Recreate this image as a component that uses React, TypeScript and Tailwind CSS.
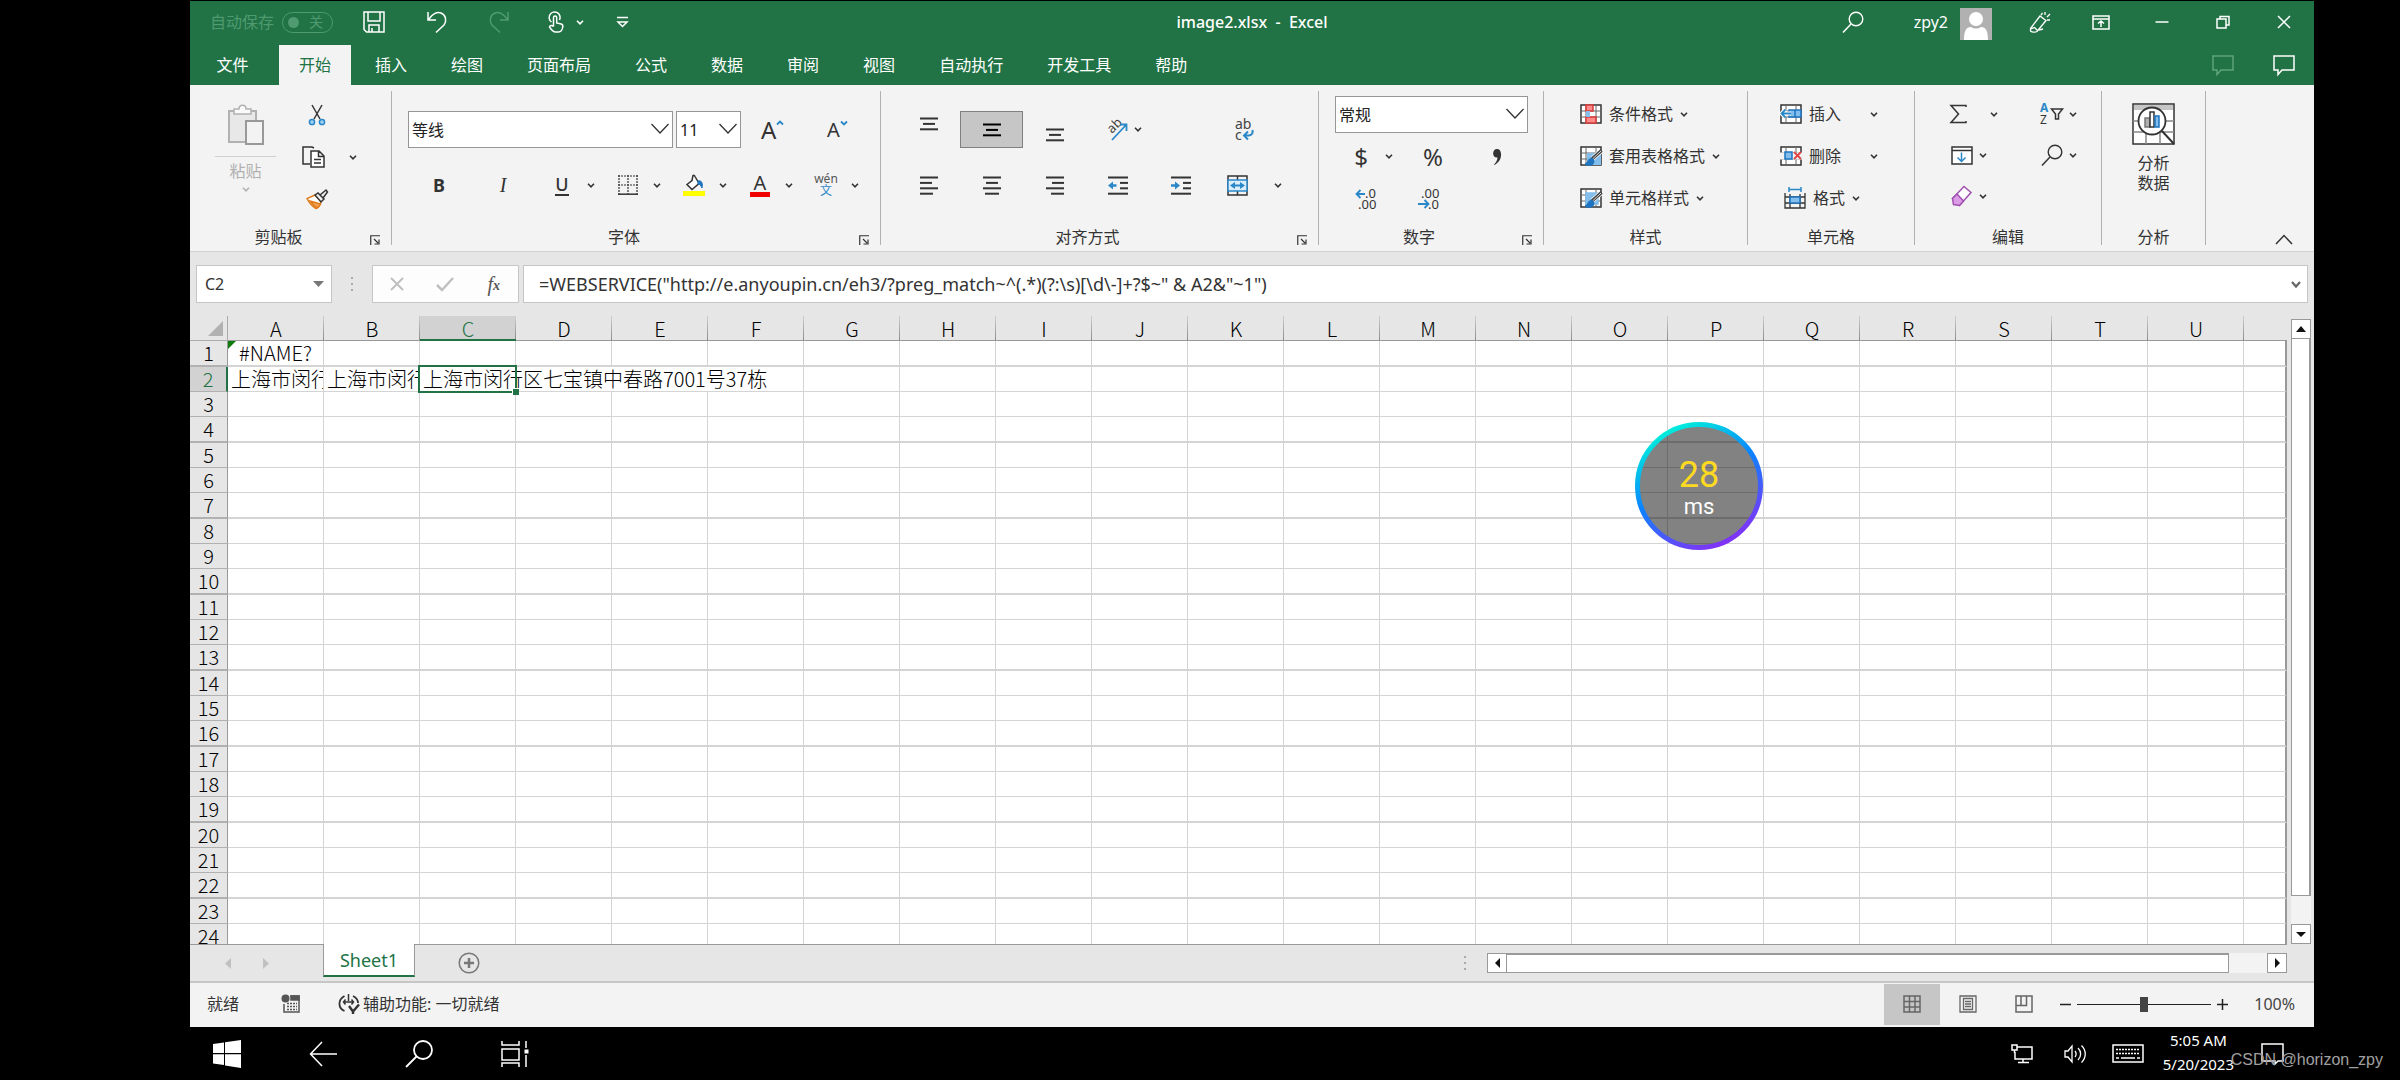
import { useState } from "react";
import type { ReactNode } from "react";
import clsx from "clsx";

const COLUMNS = "ABCDEFGHIJKLMNOPQRSTU".split("");
const ROWS = Array.from({ length: 24 }, (_, i) => i + 1);
const TABS = ["插入", "绘图", "页面布局", "公式", "数据", "审阅", "视图", "自动执行", "开发工具", "帮助"];
const FORMULA = '=WEBSERVICE("http://e.anyoupin.cn/eh3/?preg_match~^(.*)(?:\\s)[\\d\\-]+?$~" & A2&"~1")';
const CELLS: Record<string, string> = {
  A1: "#NAME?",
  A2: "上海市闵行",
  B2: "上海市闵行",
  C2: "上海市闵行区七宝镇中春路7001号37栋",
};

const Caret = ({ className = "" }: { className?: string }) => (
  <svg width="8" height="5" viewBox="0 0 8 5" fill="none" stroke="currentColor" strokeWidth="1.6" className={clsx("shrink-0", className)}>
    <path d="M1 .8 4 3.8 7 .8" />
  </svg>
);

const Icon = ({ w = 22, h = 22, className = "", children }: { w?: number; h?: number; className?: string; children: ReactNode }) => (
  <svg
    width={w}
    height={h}
    viewBox={`0 0 ${w} ${h}`}
    fill="none"
    stroke="currentColor"
    strokeWidth="1.5"
    className={clsx("shrink-0 overflow-visible", className)}
    aria-hidden="true"
  >
    {children}
  </svg>
);

/* ---------- Ribbon building blocks ---------- */

const Group = ({ label, launcher, className, children }: { label: string; launcher?: boolean; className: string; children: ReactNode }) => (
  <section aria-label={label} className={clsx("flex shrink-0 flex-col border-r border-[#b1b1b1]", className)}>
    <div className="min-h-0 flex-1">{children}</div>
    <div className="flex h-4 items-center">
      <span className="flex-1 text-center text-base leading-5">{label}</span>
      {launcher && (
        <button type="button" aria-label={label + "设置"} className="mr-2 flex w-4 justify-center pt-1.5">
          <Icon w={10} h={10}>
            <path d="M.75 10V.75H10M4 4l4 4M9 4.5V9H4.5" strokeWidth="1.2" />
          </Icon>
        </button>
      )}
    </div>
  </section>
);

const Tool = ({ label, className = "", children }: { label: string; className?: string; children: ReactNode }) => (
  <button type="button" aria-label={label} className={clsx("flex shrink-0 items-center", className)}>
    {children}
  </button>
);

const Split = ({ label, gap = "gap-[14px]", children }: { label: string; gap?: string; children: ReactNode }) => (
  <button type="button" aria-label={label} className={clsx("flex h-9 shrink-0 items-center", gap)}>
    <span className="flex w-[22px] justify-center">{children}</span>
    <Caret />
  </button>
);

const Combo = ({ label, value, className }: { label: string; value: string; className: string }) => (
  <div className={clsx("relative h-[37px]", className)}>
    <select aria-label={label} defaultValue={value} className="size-full appearance-none border border-[#969696] bg-white pl-[3px] text-base text-[#222]">
      <option>{value}</option>
    </select>
    <Icon w={20} h={12} className="pointer-events-none absolute top-3 right-[3px]">
      <path d="M1.5 1 10 10l8.5-9" strokeWidth="1.3" />
    </Icon>
  </div>
);

/* ---------- Icons ---------- */

const lines = (rows: number[][]) => rows.map(([x1, x2], i) => <path key={i} d={`M${x1} ${1.5 + i * 5.4}H${x2}`} strokeWidth="2" />);

const GridBase = () => (
  <>
    <path d="M1 1h20v18H1z" fill="#fff" />
    <path d="M1 7h20M1 13h20M6 1v18M16 1v18" stroke="#666" strokeWidth="1" />
  </>
);

const Brush = () => (
  <>
    <path d="M21 5 12 13" stroke="#fff" strokeWidth="5" />
    <path d="M21.5 4.5 12 13" stroke="#444" strokeWidth="3.4" />
    <path d="M21 5 12.5 13" stroke="#ddd" strokeWidth="1" />
    <path d="M12 12c-4 0-4 5-7 6 3 2.500 9 2 9-3z" fill="#1e74c0" stroke="#1e74c0" strokeWidth="1" />
  </>
);

const SearchIcon = () => (
  <Icon>
    <circle cx="14" cy="8" r="6.8" strokeWidth="1.4" />
    <path d="M9 13 1 21.5" />
  </Icon>
);

/* ---------- Title bar and tabs ---------- */

const TitleBar = () => (
  <header className="grid h-11 shrink-0 grid-cols-[1fr_auto_1fr] items-center pb-0.5 text-white">
    <div className="flex items-center">
      <label className="flex items-center gap-2 pl-5 text-[#4f9a70]">
        <span className="text-base">自动保存</span>
        <span className="flex h-[21px] w-[51px] items-center rounded-full border border-[#4f9a70] pl-[5px]">
          <input type="checkbox" disabled className="size-[11px] appearance-none rounded-full bg-[#4f9a70]" />
          <span className="ml-2.5 text-sm leading-none">关</span>
        </span>
      </label>
      <div className="flex items-center pl-[30px]">
        <Tool label="保存" className="w-[64px]">
          <Icon>
            <path d="M1 1h20v20H3.5L1 18.5zM5 1v9h12V1M6 21v-7h10v7M9 17v4" />
          </Icon>
        </Tool>
        <Tool label="撤消" className="w-[61px]">
          <Icon w={21} h={22}>
            <path d="M1 1v8h8M1.500 8.500C5 3 10 .5 14 2c5 2 6 8 3 12l-8 7.500" />
          </Icon>
        </Tool>
        <Tool label="恢复" className="w-[59px] text-[#4f9a70]">
          <Icon w={21} h={22}>
            <path d="M20 1v8h-8M19.500 8.500C16 3 11 .5 7 2 2 4 1 10 4 14l8 7.500" />
          </Icon>
        </Tool>
        <Tool label="触摸/鼠标模式" className="w-[68px] gap-3">
          <Icon w={17} h={22}>
            <path d="M4.500 11A5.500 5.500 0 1 1 12.500 9M6.500 15.500V6.500a1.600 1.600 0 0 1 3.200 0V12l4.500 1c1.500.5 1.800 1.500 1.600 3-.5 3-2 5-4.300 5H8.500c-2.500 0-4-2-6-5 .5-2 2.500-2 4-.5" />
          </Icon>
          <Caret />
        </Tool>
        <Tool label="自定义快速访问工具栏">
          <Icon w={14} h={12}>
            <path d="M2 1.5h11M3 6l4.5 4.5L12 6z" />
          </Icon>
        </Tool>
      </div>
    </div>
    <h1 className="text-base font-medium whitespace-pre">image2.xlsx&nbsp; -&nbsp; Excel</h1>
    <div className="flex items-center justify-end">
      <Tool label="搜索" className="mr-[50px]">
        <SearchIcon />
      </Tool>
      <button type="button" className="mr-[17px] flex items-center gap-3 text-base">
        zpy2
        <svg width="32" height="32" viewBox="0 0 32 32" className="mt-1" aria-hidden="true">
          <path fill="#b1b1b1" d="M0 0h32v32H0z" />
          <circle cx="16" cy="11" r="7" fill="#fff" />
          <path fill="#fff" d="M4 32c0-9 2-13 7-13 3 2 7 2 10 0 5 0 7 4 7 13z" />
        </svg>
      </button>
      <Tool label="绘图工具" className="w-[61px] justify-center">
        <Icon>
          <path d="M1.500 17.500 11 5l6 4.500-9 11c-1.500 1-5 1-6.500-.5zM1.500 18l4-1.500 3 3M12 4l1.500-2M16 1v3M18 6l3-3M18 9h3M10 19l4-1" strokeWidth="1.3" />
        </Icon>
      </Tool>
      <Tool label="功能区显示选项" className="w-[61px] justify-center">
        <Icon w={18} h={15}>
          <path d="M1 1h16v13H1zM1 4h16M9 12V6M6 8.500 9 6l3 2.500" />
        </Icon>
      </Tool>
      <Tool label="最小化" className="w-[61px] justify-center">
        <Icon w={14} h={14}>
          <path d="M.5 7h13" />
        </Icon>
      </Tool>
      <Tool label="还原" className="w-[61px] justify-center">
        <Icon w={14} h={14}>
          <path d="M1 4h9v9H1zM4 4V1.500h9V10h-3" />
        </Icon>
      </Tool>
      <Tool label="关闭" className="w-[61px] justify-center">
        <Icon w={14} h={14}>
          <path d="m1 1 12 12M13 1 1 13" />
        </Icon>
      </Tool>
    </div>
  </header>
);

const CommentIcon = () => (
  <Icon w={22} h={21}>
    <path d="M1 1h20v14H9l-4 4.500V15H1z" />
  </Icon>
);

const TabBar = () => (
  <nav className="flex h-10 shrink-0 gap-1 text-base text-white">
    <button type="button" className="w-[85px]">文件</button>
    <button type="button" className="bg-[#f3f3f3] px-5 text-[#217346]">开始</button>
    {TABS.map((tab) => (
      <button key={tab} type="button" className="px-5">
        {tab}
      </button>
    ))}
    <div className="ml-auto flex">
      <Tool label="批注" className="w-[61px] justify-center text-[#5ea47c]">
        <CommentIcon />
      </Tool>
      <Tool label="共享批注" className="w-[61px] justify-center">
        <CommentIcon />
      </Tool>
    </div>
  </nav>
);

/* ---------- Ribbon groups ---------- */

const ClipboardGroup = () => (
  <Group label="剪贴板" launcher className="w-[202px]">
    <div className="flex pl-[25px]">
      <button type="button" className="flex w-[61px] flex-col items-center pt-[13px] text-[#b1b1b1]">
        <Icon w={36} h={41}>
          <path d="M1 7h27v31H1z" fill="#e8e8e8" strokeWidth="2" />
          <path d="M6 10V5h5c0-5 7-5 7 0h5v5z" fill="#fafafa" />
          <path d="M18 17h17v23H18z" fill="#f3f3f3" stroke="#999" strokeWidth="2" />
        </Icon>
        <span className="mt-[11px] w-full border-t border-[#d0d0d0] pt-1 text-base leading-5">粘贴</span>
        <Caret className="mt-1.5" />
      </button>
      <div className="flex flex-col items-start gap-0.5 pt-1 pl-[26px]">
        <Tool label="剪切" className="h-10 pl-1">
          <Icon>
            <path d="m6 1 8 14M16 1 8 15" />
            <circle cx="6" cy="18" r="2.6" stroke="#2b88c8" fill="#9fd0f0" />
            <circle cx="16" cy="18" r="2.6" stroke="#2b88c8" fill="#9fd0f0" />
          </Icon>
        </Tool>
        <Tool label="复制" className="h-10 gap-6">
          <Icon w={23} h={22}>
            <path d="M8 18H1V1h9l2 1" />
            <path d="M9 5h8l5 5v11H9zM16.500 5v5.500H22M12 13.500h7M12 17h7" fill="#fff" />
          </Icon>
          <Caret />
        </Tool>
        <Tool label="格式刷" className="h-10 pl-1">
          <Icon w={22} h={21}>
            <path d="M9 6 1 9.500c2 4 5 8 9 10 3-1 4-3 5-7z" fill="#fff" stroke="#e07b1c" />
            <path d="M4 12c2 3 4 5 7 7 2-1 3-3 3.500-4z" fill="#f0a050" stroke="#e07b1c" />
            <path d="m9 6 3-2 6 6-3 3zM14 6l6-5 1.500 2L17 9" fill="#eee" />
          </Icon>
        </Tool>
      </div>
    </div>
  </Group>
);

const FontGroup = () => (
  <Group label="字体" launcher className="w-[489px]">
    <div className="flex items-center pt-5 pl-4">
      <Combo label="字体" value="等线" className="w-[265px]" />
      <Combo label="字号" value="11" className="ml-[3px] w-[65px]" />
      <Tool label="增大字号" className="ml-[20px] w-[66px]">
        <span className="text-2xl leading-none">A</span>
        <Icon w={8} h={22} className="text-[#2b88c8]">
          <path d="M1 5.500 4 2.500l3 3" strokeWidth="1.8" />
        </Icon>
      </Tool>
      <Tool label="减小字号">
        <span className="text-xl leading-none">A</span>
        <Icon w={8} h={22} className="text-[#2b88c8]">
          <path d="m1 2.500 3 3 3-3" strokeWidth="1.8" />
        </Icon>
      </Tool>
    </div>
    <div className="mt-[19px] flex h-9 items-center pl-4 text-lg leading-none">
      <Tool label="加粗" className="w-[62px] justify-center font-bold">
        B
      </Tool>
      <Tool label="倾斜" className="w-[66px] justify-center font-['Liberation_Serif',serif] text-xl italic">
        I
      </Tool>
      <div className="flex gap-[22px] pl-[15px]">
        <Split label="下划线">
          <span className="border-b-2 border-[#333] leading-5 font-medium">U</span>
        </Split>
        <Split label="边框">
          <Icon w={20} h={20}>
            <path d="M0 1h20M1 0v19M19 0v19M10 0v19M0 10h20" strokeDasharray="2 1" strokeWidth="1.2" />
            <path d="M0 19.200h20" />
          </Icon>
        </Split>
        <Split label="填充颜色">
          <Icon>
            <path d="m10 1.500-1 5-5 4 5 5 7-6-4-7c-.5-1-1.500-1.500-2-1z" fill="#fff" />
            <path d="M15 7c4-1 5 3 4 7-1-2-2-4-4-4z" fill="#1e74c0" stroke="#1e74c0" strokeWidth="1" />
            <path d="M0 17h22v5H0z" fill="#ff0" stroke="none" />
          </Icon>
        </Split>
        <Split label="字体颜色">
          <span className="border-b-[5px] border-[#f00000] px-1 text-xl leading-[18px]">A</span>
        </Split>
        <Split label="拼音指南">
          <span className="flex flex-col items-center text-xs leading-3 text-[#555]">
            <span>wén</span>
            <span className="text-[#2b88c8]">文</span>
          </span>
        </Split>
      </div>
    </div>
  </Group>
);

const AlignmentGroup = () => (
  <Group label="对齐方式" launcher className="w-[438px]">
    <div className="flex items-center pt-5 pl-4">
      <Tool label="顶端对齐" className="h-[37px] w-[63px] items-start justify-center pt-1.5">
        <Icon w={18} h={14}>{lines([[0, 18], [3, 15], [0, 18]])}</Icon>
      </Tool>
      <Tool label="垂直居中" className="h-[37px] w-[63px] justify-center border border-[#808080] bg-[#c6c6c6] text-black">
        <Icon w={18} h={14}>{lines([[0, 18], [3, 15], [0, 18]])}</Icon>
      </Tool>
      <Tool label="底端对齐" className="h-[37px] w-[63px] items-end justify-center pb-1.5">
        <Icon w={18} h={14}>{lines([[0, 18], [3, 15], [0, 18]])}</Icon>
      </Tool>
      <Tool label="方向" className="w-[126px] gap-1.5 pl-5">
        <Icon>
          <text fontSize="13" fill="#444" stroke="none" transform="translate(6 15) rotate(-45)">ab</text>
          <path d="M6 21 20 6M14 5.500h6.500V12" stroke="#2b88c8" strokeWidth="1.8" />
        </Icon>
        <Caret />
      </Tool>
      <Tool label="自动换行" className="w-[63px] justify-center">
        <Icon w={20} h={22}>
          <text x="1" y="10" fontSize="14" fill="#444" stroke="none">ab</text>
          <text x="1" y="21" fontSize="14" fill="#444" stroke="none">c</text>
          <path d="M18.500 11c1 5-3 6-8 5.500M14 12.500 10 16.500l4 4" stroke="#2b88c8" strokeWidth="2" />
        </Icon>
      </Tool>
    </div>
    <div className="mt-[19px] flex h-9 items-center pl-4">
      <Tool label="左对齐" className="w-[63px] justify-center">
        <Icon w={18} h={19}>{lines([[0, 18], [0, 12], [0, 18], [0, 13]])}</Icon>
      </Tool>
      <Tool label="居中" className="w-[63px] justify-center">
        <Icon w={18} h={19}>{lines([[0, 18], [3, 15], [0, 18], [2, 16]])}</Icon>
      </Tool>
      <Tool label="右对齐" className="w-[63px] justify-center">
        <Icon w={18} h={19}>{lines([[0, 18], [6, 18], [0, 18], [5, 18]])}</Icon>
      </Tool>
      <Tool label="减少缩进量" className="w-[63px] justify-center">
        <Icon w={20} h={19}>
          {lines([[0, 20], [12, 20], [12, 20], [0, 20]])}
          <path d="M8.500 9.500H2" stroke="#2b88c8" strokeWidth="2.5" />
          <path d="M5 5.500v8L0 9.500z" fill="#2b88c8" stroke="none" />
        </Icon>
      </Tool>
      <Tool label="增加缩进量" className="w-[63px] justify-center">
        <Icon w={20} h={19}>
          {lines([[0, 20], [12, 20], [12, 20], [0, 20]])}
          <path d="M0 9.500h6" stroke="#2b88c8" strokeWidth="2.5" />
          <path d="M4 5.500v8l5-4z" fill="#2b88c8" stroke="none" />
        </Icon>
      </Tool>
      <Tool label="合并后居中" className="gap-[26px] pl-[15px]">
        <Icon w={21} h={21}>
          <path d="M1 1h19v19H1zM10.500 1v4M10.500 16v4" />
          <path d="M1 5h19v11H1z" fill="#d9edfb" stroke="#2b88c8" />
          <path d="M5 10.500h11" stroke="#2b88c8" strokeWidth="2" />
          <path d="M8 7v7l-5-3.500zM13 7v7l5-3.500z" fill="#2b88c8" stroke="none" />
        </Icon>
        <Caret />
      </Tool>
    </div>
  </Group>
);

const NumberGroup = () => (
  <Group label="数字" launcher className="w-[225px]">
    <div className="flex flex-col gap-[5px] pt-[5px] pl-4">
      <Combo label="数字格式" value="常规" className="w-[193px]" />
      <div className="flex h-[37px] items-center pl-[15px] text-2xl leading-none">
        <Split label="会计数字格式" gap="gap-[13px]">$</Split>
        <Tool label="百分比样式" className="ml-2 w-16 justify-center">%</Tool>
        <Tool label="千位分隔样式" className="w-16 justify-center">
          <Icon w={10} h={18}>
            <path d="M9 5.500c.5 5-2 9-6.500 11.500l-.5-.5c2-2 3.500-4.500 3.500-7C-.5 10 0 1 5 1c2.500 0 3.800 2 4 4.500z" fill="currentColor" stroke="none" />
          </Icon>
        </Tool>
      </div>
      <div className="flex h-[37px] items-center">
        <Tool label="增加小数位数" className="w-[62px] justify-center">
          <Icon>
            <text x="10" y="10" fontSize="13" fill="#333" stroke="none">.0</text>
            <text x="3" y="21" fontSize="13" fill="#333" stroke="none">.00</text>
            <path d="M10 6H1.500M5.500 2l-4 4 4 4" stroke="#2b88c8" strokeWidth="1.8" />
          </Icon>
        </Tool>
        <Tool label="减少小数位数" className="w-16 justify-center">
          <Icon>
            <text x="3" y="10" fontSize="13" fill="#333" stroke="none">.00</text>
            <text x="10" y="21" fontSize="13" fill="#333" stroke="none">.0</text>
            <path d="M0 16h10M6.500 12l4 4-4 4" stroke="#2b88c8" strokeWidth="1.8" />
          </Icon>
        </Tool>
      </div>
    </div>
  </Group>
);

const TextTool = ({ label, caretGap = "", children }: { label: string; caretGap?: string; children: ReactNode }) => (
  <button type="button" className="flex h-10 items-center gap-[7px] text-base whitespace-nowrap">
    {children}
    <span>{label}</span>
    <Caret className={caretGap} />
  </button>
);

const StylesGroup = () => (
  <Group label="样式" className="w-[204px]">
    <div className="flex flex-col items-start gap-0.5 pt-[3px] pl-9">
      <TextTool label="条件格式">
        <Icon w={22} h={20}>
          <GridBase />
          <path d="M6 1h7v6H6zM6 13h10v6H6z" fill="#ff8a8a" stroke="#d83b3b" />
          <path d="M6 7h4v6H6z" fill="#83beec" stroke="none" />
        </Icon>
      </TextTool>
      <TextTool label="套用表格格式">
        <Icon w={22} h={20}>
          <GridBase />
          <path d="M7 7h14v12H7z" fill="#83beec" stroke="none" />
          <Brush />
        </Icon>
      </TextTool>
      <TextTool label="单元格样式">
        <Icon w={22} h={20}>
          <GridBase />
          <path d="M6 5h12v11H6z" fill="#83beec" stroke="#83beec" />
          <Brush />
        </Icon>
      </TextTool>
    </div>
  </Group>
);

const CellsGroup = () => (
  <Group label="单元格" className="w-[167px]">
    <div className="flex flex-col items-start gap-0.5 pt-[3px] pl-8">
      <TextTool label="插入" caretGap="ml-[22px]">
        <Icon w={22} h={20}>
          <GridBase />
          <path d="M9 6h12v7H9z" fill="#83beec" stroke="#1e74c0" />
          <path d="M15 6v7" stroke="#1e74c0" />
          <path d="M11 9.500H1.500M5.500 5.500l-4 4 4 4" stroke="#fff" strokeWidth="4" />
          <path d="M11 9.500H1.500M5.500 5.500l-4 4 4 4" stroke="#2b88c8" strokeWidth="1.8" />
        </Icon>
      </TextTool>
      <TextTool label="删除" caretGap="ml-[22px]">
        <Icon w={22} h={20}>
          <GridBase />
          <path d="M0 6.500h22v7H0z" fill="#f3f3f3" stroke="none" />
          <path d="M5 6h7v7H5z" fill="#83beec" stroke="#1e74c0" />
          <path d="m14 6 7 7M21 6l-7 7" stroke="#e04343" strokeWidth="1.8" />
        </Icon>
      </TextTool>
      <div className="pl-1">
        <TextTool label="格式">
          <Icon>
            <path d="M5 0v5M17 0v5M5 2.500h12" stroke="#2b88c8" />
            <path d="M1 6v15h20V6M1 10h20M1 16h20M6 7v14M16 7v14" strokeWidth="1.3" />
            <path d="M6 10h10v6H6z" fill="#83beec" stroke="#1e74c0" />
          </Icon>
        </TextTool>
      </div>
    </div>
  </Group>
);

const EditingGroup = () => (
  <Group label="编辑" className="w-[187px]">
    <div className="flex justify-between pr-6 pl-9">
      <div className="flex flex-col items-start gap-[5px] pt-[5px]">
        <Split label="自动求和" gap="gap-[17px]">
          <Icon w={22} h={20}>
            <path d="M15 3V1.500H0l7.500 8.500L0 18.500h15V17" />
          </Icon>
        </Split>
        <Split label="填充" gap="gap-1.5">
          <Icon w={22} h={19}>
            <path d="M1 1h20v17H1z" fill="#fff" />
            <path d="M1 4.500h20" />
            <path d="M10.500 6.500v9M6.500 11.500l4 4 4-4" stroke="#2b88c8" />
          </Icon>
        </Split>
        <Split label="清除" gap="gap-1.5">
          <Icon>
            <path d="M1.500 13.500 13 1.500l7 6L8.500 20.500z" fill="#fff" stroke="#a050b0" />
            <path d="M1.500 13.500 6 9l6.500 7-4 4.500-6-1z" fill="#dc9be6" stroke="#a050b0" />
          </Icon>
        </Split>
      </div>
      <div className="flex flex-col items-start gap-[5px] pt-[5px]">
        <Split label="排序和筛选" gap="gap-1.5">
          <Icon>
            <text x="-1" y="9" fontSize="12" fontWeight="700" fill="#2b88c8" stroke="none">A</text>
            <text x="-1" y="21" fontSize="12" fill="#333" stroke="none">Z</text>
            <path d="M10.500 6h11L17.500 11v5h-3v-5z" />
          </Icon>
        </Split>
        <Split label="查找和选择" gap="gap-1.5">
          <SearchIcon />
        </Split>
      </div>
    </div>
  </Group>
);

const AnalysisGroup = () => (
  <Group label="分析" className="w-[104px]">
    <button type="button" className="flex w-full flex-col items-center pt-3 text-base leading-5">
      <Icon w={43} h={42} className="mb-2">
        <path d="M1 1h41v40H1z" fill="#fff" />
        <path d="M2 2h39v5H2z" fill="#c6c6c6" stroke="none" />
        <path d="M1 18h41M1 29h41M14 29v12M28 29v12" stroke="#888" />
        <circle cx="20" cy="18" r="13.5" fill="#fff" strokeWidth="1.8" />
        <path d="M13 15h5v9h-5z" fill="#b1b1b1" stroke="#777" />
        <path d="M18 9h4v15h-4z" fill="#fff" />
        <path d="M23 13h4v11h-4z" fill="#83beec" stroke="#1e74c0" />
        <path d="m30 28 12 13" strokeWidth="2" />
      </Icon>
      <span>分析</span>
      <span>数据</span>
    </button>
  </Group>
);

const Ribbon = () => (
  <div className="flex h-[167px] shrink-0 border-b border-[#d2d2d2] bg-[#f3f3f3] py-1.5 text-[#333]">
    <ClipboardGroup />
    <FontGroup />
    <AlignmentGroup />
    <NumberGroup />
    <StylesGroup />
    <CellsGroup />
    <EditingGroup />
    <AnalysisGroup />
    <Tool label="折叠功能区" className="mt-auto mr-[21px] ml-auto">
      <Icon w={18} h={11}>
        <path d="m1 10 8-8.500 8 8.500" />
      </Icon>
    </Tool>
  </div>
);

/* ---------- Formula bar ---------- */

const FormulaBar = () => (
  <div className="flex h-16 shrink-0 items-start bg-[#e6e6e6] px-1.5 pt-[13px] text-base text-[#333]">
    <div className="relative h-[38px] w-[136px]">
      <input aria-label="名称框" defaultValue="C2" className="size-full border border-[#c6c6c6] bg-white pl-2" />
      <svg width="11" height="6" className="pointer-events-none absolute top-4 right-2" aria-hidden="true">
        <path d="M0 0h11L5.500 6z" fill="#777" />
      </svg>
    </div>
    <svg width="40" height="38" aria-hidden="true">
      <path d="M19 12h2v2h-2zM19 18h2v2h-2zM19 24h2v2h-2z" fill="#aaa" />
    </svg>
    <div className="flex h-[38px] w-[147px] border border-[#c6c6c6] bg-[#fdfdfd]">
      <Tool label="取消" className="flex-1 justify-center text-[#c0c0c0]">
        <Icon w={14} h={14}>
          <path d="m1 1 12 12M13 1 1 13" strokeWidth="2" />
        </Icon>
      </Tool>
      <Tool label="输入" className="flex-1 justify-center text-[#c0c0c0]">
        <Icon w={18} h={14}>
          <path d="m1 8 5 5L17 1" strokeWidth="2.5" />
        </Icon>
      </Tool>
      <Tool label="插入函数" className="flex-1 justify-center font-['Liberation_Serif',serif] text-xl text-[#555] italic">
        f<span className="pt-1 text-sm font-bold">x</span>
      </Tool>
    </div>
    <div className="relative ml-1 h-[38px] min-w-0 flex-1">
      <input aria-label="编辑栏" defaultValue={FORMULA} className="size-full border border-[#c6c6c6] bg-white pl-[15px] text-lg" />
      <Icon w={10} h={7} className="pointer-events-none absolute top-4 right-[7px] text-[#666]">
        <path d="m1 1 4 4.500L9 1" strokeWidth="2.2" />
      </Icon>
    </div>
  </div>
);

/* ---------- Sheet ---------- */

const Cell = ({ col, row }: { col: string; row: number }) => {
  const text = CELLS[`${col}${row}`];
  const selected = col === "C" && row === 2;
  // the address in C2 runs on over D2 and E2
  const spilled = row === 2 && (col === "D" || col === "E");
  return (
    <td className={clsx("relative border-[#d4d4d4] p-0 align-top", row % 3 === 1 ? "h-[26px] border-b-2" : "h-[25px] border-b", !spilled && "border-r")}>
      {text && (
        <div className={clsx("leading-[23px] whitespace-nowrap", row === 1 ? "text-center" : "pl-[3px]", !selected && "overflow-hidden")}>{text}</div>
      )}
      {row === 1 && col === "A" && <span className="absolute top-0 left-0 size-2 bg-[#0f7b0f] [clip-path:polygon(0_0,100%_0,0_100%)]" />}
      {selected && (
        <span className="pointer-events-none absolute -inset-0.5 z-10 border-2 border-[#217346]">
          <span className="absolute -right-1 -bottom-1 size-[7px] border-t border-l border-white bg-[#217346]" />
        </span>
      )}
    </td>
  );
};

const Sheet = () => (
  <div className="min-w-0 flex-1 overflow-hidden bg-white">
    <table className="w-full table-fixed border-separate border-spacing-0 font-['Noto_Sans_CJK_SC',sans-serif] text-xl font-light text-black">
      <colgroup>
        <col className="w-[38px]" />
        {COLUMNS.map((c) => (
          <col key={c} className="w-24" />
        ))}
        <col />
      </colgroup>
      <thead>
        <tr className="bg-[#e6e6e6]">
          <th aria-label="全选" className="h-[25px] border-r border-b border-[#ababab] p-0">
            <svg width="15" height="15" className="ml-auto mr-1" aria-hidden="true">
              <path d="M15 0v15H0z" fill="#b1b1b1" />
            </svg>
          </th>
          {COLUMNS.map((c) => (
            <th
              key={c}
              scope="col"
              className={clsx(
                "relative h-[25px] p-0 pt-0.5 leading-5 font-light after:absolute after:inset-y-0 after:right-0 after:w-px after:bg-linear-to-b after:from-[#d0d0d0] after:to-[#8c8c8c]",
                c === "C" ? "border-b-2 border-[#217346] bg-[#d2d2d2] text-[#217346]" : "border-b border-[#999]",
              )}
            >
              {c}
            </th>
          ))}
          <th className="border-b border-[#999] p-0" />
        </tr>
      </thead>
      <tbody>
        {ROWS.map((r) => (
          <tr key={r}>
            <th
              scope="row"
              className={clsx(
                "p-0 align-top leading-[23px] font-light",
                r % 3 === 1 ? "border-b-2" : "border-b",
                r === 2 ? "border-r-2 border-r-[#217346] border-b-[#b1b1b1] bg-[#d2d2d2] text-[#217346]" : "border-r border-r-[#999] border-b-[#b1b1b1] bg-[#e6e6e6]",
              )}
            >
              {r}
            </th>
            {COLUMNS.map((c) => (
              <Cell key={c} col={c} row={r} />
            ))}
            <td className={clsx("border-r-2 border-r-[#999] border-b-[#d4d4d4] p-0", r % 3 === 1 ? "border-b-2" : "border-b")} />
          </tr>
        ))}
      </tbody>
    </table>
  </div>
);

const ScrollButton = ({ label, d, className }: { label: string; d: string; className: string }) => (
  <button type="button" aria-label={label} className={clsx("flex shrink-0 items-center justify-center border border-[#999] bg-white", className)}>
    <svg width="10" height="10" aria-hidden="true">
      <path d={d} fill="#111" />
    </svg>
  </button>
);

const VerticalScroll = () => (
  <div className="mt-[3px] mr-[3px] ml-1 flex w-5 shrink-0 flex-col bg-[#f3f3f3]">
    <ScrollButton label="向上滚动" d="M5 2l5 6H0z" className="h-5" />
    <div className="-mt-px flex-1 border border-r-2 border-[#999] bg-white" />
    <div className="h-7" />
    <ScrollButton label="向下滚动" d="M0 3h10L5 8z" className="h-5" />
  </div>
);

/* ---------- Sheet tabs and status bar ---------- */

const SheetTabs = () => (
  <div className="flex h-[39px] shrink-0 items-start border-b-2 border-[#c6c6c6] bg-[#e6e6e6]">
    <div className="flex h-full flex-1 border-t border-[#999]">
      <div className="flex h-9 w-[133px] items-center gap-8 pl-[35px] text-[#c0c0c0]">
        <svg width="6" height="11" role="img" aria-label="上一张">
          <path d="M6 0v11L0 5.500z" fill="currentColor" />
        </svg>
        <svg width="6" height="11" role="img" aria-label="下一张">
          <path d="M0 0v11l6-5.500z" fill="currentColor" />
        </svg>
      </div>
      <button type="button" className="-mt-px h-[33px] w-[92px] border-x border-b-2 border-x-[#999] border-b-[#217346] bg-white text-lg leading-none text-[#217346]">
        Sheet1
      </button>
      <Tool label="新工作表" className="ml-[43px] h-9 text-[#777]">
        <Icon>
          <circle cx="11" cy="11" r="9.8" />
          <path d="M11 6v10M6 11h10" strokeWidth="2.5" />
        </Icon>
      </Tool>
      <svg width="3" height="38" className="mr-5 ml-auto" aria-hidden="true">
        <path d="M0 11h2v2H0zM0 17h2v2H0zM0 23h2v2H0z" fill="#aaa" />
      </svg>
    </div>
    <div className="flex h-full w-[800px] border-t border-[#999] pt-2">
      <ScrollButton label="向左滚动" d="M3 5l5-5v10z" className="h-5 w-5" />
      <div className="-ml-px h-5 flex-1 border border-t-2 border-[#999] bg-white" />
      <div className="h-5 w-[38px] bg-[#f3f3f3]" />
      <ScrollButton label="向右滚动" d="M3 0l5 5-5 5z" className="h-5 w-5" />
    </div>
    <div className="w-[27px]" />
  </div>
);

const StatusBar = () => {
  const [zoom, setZoom] = useState(100);
  return (
    <footer className="flex h-11 shrink-0 items-center bg-[#f3f3f3] pb-0.5 text-base text-[#333]">
      <span className="w-[91px] pl-[17px]">就绪</span>
      <Tool label="录制宏" className="w-[57px] text-[#555]">
        <Icon w={19} h={18}>
          <path d="M9 1h9v16H3V9" />
          <path d="M10 1h8v4h-8z" fill="currentColor" />
          <circle cx="4.500" cy="3.500" r="4" fill="currentColor" stroke="none" />
          <path d="M6 8.500h10M6 11.500h10M6 14.500h10" strokeDasharray="2 1" />
        </Icon>
      </Tool>
      <button type="button" className="flex items-center gap-[3px]">
        <Icon w={22} h={20}>
          <path d="M6.500 2C-.5 6 0 14 6.500 17M15 2c3 1.500 5 4 5 7" strokeWidth="1.8" />
          <path d="M10.500 0v7M6 8h9M7.500 5.500 5.500 8l2 2.500M13.500 5.500l2 2.500-2 2.500" />
          <path d="m11 12 4 5.500 6-7M15 16v4" strokeWidth="2.4" />
        </Icon>
        辅助功能: 一切就绪
      </button>
      <div className="ml-auto flex items-center text-[#666]">
        <Tool label="普通" className="h-[41px] w-14 justify-center bg-[#c6c6c6]">
          <Icon w={18} h={18}>
            <path d="M1 1h16v16H1zM1 6.500h16M1 12h16M6.500 1v16M12 1v16" />
          </Icon>
        </Tool>
        <Tool label="页面布局" className="h-[41px] w-14 justify-center">
          <Icon w={18} h={18}>
            <path d="M1 1h16v16H1zM4.500 3.500h9v11h-9zM6 6.500h6M6 9h6M6 11.500h6" strokeWidth="1.3" />
          </Icon>
        </Tool>
        <Tool label="分页预览" className="h-[41px] w-14 justify-center">
          <Icon w={18} h={18}>
            <path d="M1 1h16v16H1zM1 10.500h10.500V1M6 1v9" />
          </Icon>
        </Tool>
        <Tool label="缩小" className="w-[25px] justify-end pr-1.5 text-[#222]">
          <Icon w={11} h={11}>
            <path d="M0 5.500h11" />
          </Icon>
        </Tool>
        <input
          type="range"
          aria-label="显示比例"
          min={10}
          max={190}
          value={zoom}
          onChange={(e) => setZoom(Number(e.target.value))}
          className="h-4 w-[134px] appearance-none bg-[linear-gradient(#222,#222)] bg-[length:100%_1px] bg-center bg-no-repeat [&::-webkit-slider-thumb]:h-[15px] [&::-webkit-slider-thumb]:w-2 [&::-webkit-slider-thumb]:appearance-none [&::-webkit-slider-thumb]:bg-[#444]"
        />
        <Tool label="放大" className="w-[43px] pl-1.5 text-[#222]">
          <Icon w={11} h={11}>
            <path d="M0 5.500h11M5.500 0v11" />
          </Icon>
        </Tool>
        <span className="mr-[19px] text-[#444]">{zoom}%</span>
      </div>
    </footer>
  );
};

/* ---------- Taskbar ---------- */

const Taskbar = () => (
  <div className="flex h-[53px] shrink-0 items-center justify-between bg-black text-white">
    <div className="flex pl-[23px]">
      <Tool label="开始" className="w-24">
        <svg width="28" height="28" viewBox="0 0 28 28" fill="currentColor" aria-hidden="true">
          <path d="M0 4 11 2.500V13H0zM12 2.300 28 0v13H12zM0 14.200h11V25L0 23.500zM12 14.200h16V28l-16-2.500z" />
        </svg>
      </Tool>
      <Tool label="返回" className="w-24">
        <Icon w={28} h={26}>
          <path d="M28 13H1.500M13 1 1.500 13 13 25" />
        </Icon>
      </Tool>
      <Tool label="搜索" className="w-24">
        <Icon w={28} h={28}>
          <circle cx="18" cy="10" r="9" strokeWidth="1.8" />
          <path d="M11.500 16.500 1 27" strokeWidth="1.8" />
        </Icon>
      </Tool>
      <Tool label="任务视图">
        <Icon w={28} h={26}>
          <path d="M1 0v4h17V0M1 8h17v11H1zM1 26v-4h17v4M25 0v7M25 14v12" />
          <path d="M23.500 8.500h4v4h-4z" fill="currentColor" stroke="none" />
        </Icon>
      </Tool>
    </div>
    <div className="flex items-center pr-[30px]">
      <Tool label="网络" className="w-[53px]">
        <Icon w={22} h={20}>
          <path d="M6 3h15v12H4V8M1 1h5v5H1zM3.500 6v3M12 15v3M7 18.500h11" />
        </Icon>
      </Tool>
      <Tool label="音量" className="w-12">
        <Icon w={22} h={20}>
          <path d="M1 7h3l4-5v16l-4-5H1zM11 7c1.500 2 1.500 4 0 6M14 4c3.500 3.500 3.500 8.500 0 12M17.500 1.500c5 5 5 12 0 17" strokeWidth="1.3" />
        </Icon>
      </Tool>
      <Tool label="触摸键盘" className="w-[51px]">
        <Icon w={32} h={19}>
          <path d="M1 1h30v17H1z" />
          <path d="M4 5.500h24M4 9.500h24" strokeDasharray="2 1" />
          <path d="M4 14h3M9 14h14M25 14h3" />
        </Icon>
      </Tool>
      <div className="mr-[27px] pb-1 text-center text-[15px] leading-6 whitespace-nowrap">
        <div>5:05 AM</div>
        <div>5/20/2023</div>
      </div>
      <Tool label="操作中心">
        <Icon w={23} h={22}>
          <path d="M1 1h21v17h-5l-3 3v-3H1z" />
        </Icon>
      </Tool>
    </div>
  </div>
);

const LatencyBadge = () => (
  <div className="absolute top-[422px] left-[1635px] z-20 flex size-32 flex-col items-center justify-center pt-1.5 font-[Roboto,sans-serif]">
    <svg viewBox="0 0 128 128" className="absolute inset-0" aria-hidden="true">
      <defs>
        <linearGradient id="ring" x1="0.25" y1="0" x2="0.75" y2="1">
          <stop offset="0" stopColor="#00f5d8" />
          <stop offset="0.45" stopColor="#0a84ff" />
          <stop offset="1" stopColor="#8a2cf5" />
        </linearGradient>
      </defs>
      <circle cx="64" cy="64" r="61.5" fill="#000" fillOpacity="0.49" stroke="url(#ring)" strokeWidth="5" />
    </svg>
    <span className="relative text-4xl leading-9 text-[#fdd921]">28</span>
    <span className="relative text-[22px] leading-7 text-white">ms</span>
  </div>
);

export default function App() {
  return (
    <div className="relative flex h-screen flex-col overflow-hidden bg-black pt-px pr-[86px] pl-[190px] font-['Noto_Sans','Noto_Sans_CJK_SC',sans-serif]">
      <div className="shrink-0 bg-[#217346]">
        <TitleBar />
        <TabBar />
      </div>
      <Ribbon />
      <FormulaBar />
      <main className="flex min-h-0 flex-1 bg-[#e6e6e6]">
        <Sheet />
        <VerticalScroll />
      </main>
      <SheetTabs />
      <StatusBar />
      <Taskbar />
      <LatencyBadge />
      <div className="absolute right-[17px] bottom-2 font-['Liberation_Sans',sans-serif] text-base text-[#a0a0a0]">CSDN @horizon_zpy</div>
    </div>
  );
}
